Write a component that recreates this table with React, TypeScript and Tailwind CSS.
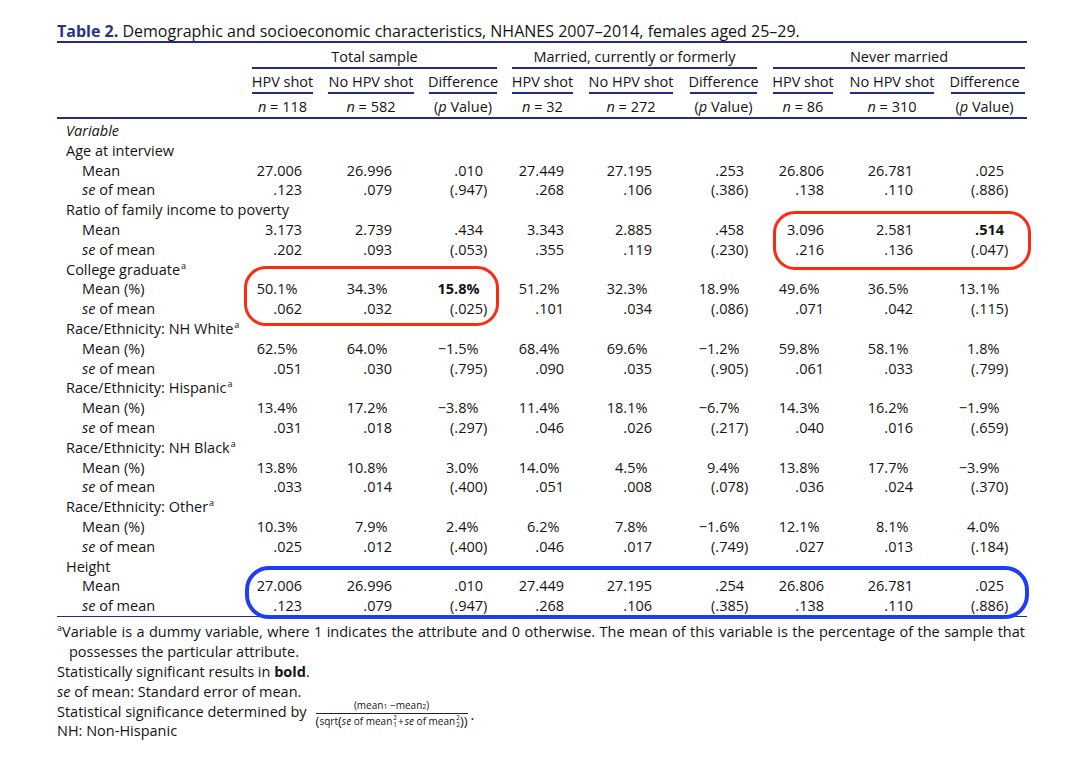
import React from "react";

type Row = { label: React.ReactNode; level: 0 | 1; vals?: string[]; bold?: number[] };

const Sup = () => <sup className="text-[9px] top-[-6px] ml-[1px]">a</sup>;
const SE = () => (
  <>
    <i>se</i> of mean
  </>
);

const rows: Row[] = [
  { label: <i>Variable</i>, level: 0 },
  { label: "Age at interview", level: 0 },
  { label: "Mean", level: 1, vals: ["27.006", "26.996", ".010", "27.449", "27.195", ".253", "26.806", "26.781", ".025"] },
  { label: <SE />, level: 1, vals: [".123", ".079", "(.947)", ".268", ".106", "(.386)", ".138", ".110", "(.886)"] },
  { label: "Ratio of family income to poverty", level: 0 },
  { label: "Mean", level: 1, vals: ["3.173", "2.739", ".434", "3.343", "2.885", ".458", "3.096", "2.581", ".514"], bold: [8] },
  { label: <SE />, level: 1, vals: [".202", ".093", "(.053)", ".355", ".119", "(.230)", ".216", ".136", "(.047)"] },
  { label: <>College graduate<Sup /></>, level: 0 },
  { label: "Mean (%)", level: 1, vals: ["50.1%", "34.3%", "15.8%", "51.2%", "32.3%", "18.9%", "49.6%", "36.5%", "13.1%"], bold: [2] },
  { label: <SE />, level: 1, vals: [".062", ".032", "(.025)", ".101", ".034", "(.086)", ".071", ".042", "(.115)"] },
  { label: <>Race/Ethnicity: NH White<Sup /></>, level: 0 },
  { label: "Mean (%)", level: 1, vals: ["62.5%", "64.0%", "\u22121.5%", "68.4%", "69.6%", "\u22121.2%", "59.8%", "58.1%", "1.8%"] },
  { label: <SE />, level: 1, vals: [".051", ".030", "(.795)", ".090", ".035", "(.905)", ".061", ".033", "(.799)"] },
  { label: <>Race/Ethnicity: Hispanic<Sup /></>, level: 0 },
  { label: "Mean (%)", level: 1, vals: ["13.4%", "17.2%", "\u22123.8%", "11.4%", "18.1%", "\u22126.7%", "14.3%", "16.2%", "\u22121.9%"] },
  { label: <SE />, level: 1, vals: [".031", ".018", "(.297)", ".046", ".026", "(.217)", ".040", ".016", "(.659)"] },
  { label: <>Race/Ethnicity: NH Black<Sup /></>, level: 0 },
  { label: "Mean (%)", level: 1, vals: ["13.8%", "10.8%", "3.0%", "14.0%", "4.5%", "9.4%", "13.8%", "17.7%", "\u22123.9%"] },
  { label: <SE />, level: 1, vals: [".033", ".014", "(.400)", ".051", ".008", "(.078)", ".036", ".024", "(.370)"] },
  { label: <>Race/Ethnicity: Other<Sup /></>, level: 0 },
  { label: "Mean (%)", level: 1, vals: ["10.3%", "7.9%", "2.4%", "6.2%", "7.8%", "\u22121.6%", "12.1%", "8.1%", "4.0%"] },
  { label: <SE />, level: 1, vals: [".025", ".012", "(.400)", ".046", ".017", "(.749)", ".027", ".013", "(.184)"] },
  { label: "Height", level: 0 },
  { label: "Mean", level: 1, vals: ["27.006", "26.996", ".010", "27.449", "27.195", ".254", "26.806", "26.781", ".025"] },
  { label: <SE />, level: 1, vals: [".123", ".079", "(.947)", ".268", ".106", "(.385)", ".138", ".110", "(.886)"] },
];

const colPr = [
  "pr-[26px]",
  "pr-[37px]",
  "pr-[29px]",
  "pr-[25px]",
  "pr-[38px]",
  "pr-[29px]",
  "pr-[26px]",
  "pr-[38px]",
  "pr-[23px]",
];

const headW = [
  "w-[61px]",
  "w-[86px]",
  "w-[68px]",
  "w-[61px]",
  "w-[84px]",
  "w-[67px]",
  "w-[60px]",
  "w-[84px]",
  "w-[74px] pr-[7px]",
];

const heads = ["HPV shot", "No HPV shot", "Difference", "HPV shot", "No HPV shot", "Difference", "HPV shot", "No HPV shot", "Difference"];
const N = ({ v }: { v: string }) => (
  <span className="whitespace-pre">
    <i>n</i> = {v}
  </span>
);
const P = () => (
  <span className="whitespace-pre">
    (<i>p</i> Value)
  </span>
);
const ns: React.ReactNode[] = [
  <N v="118" />,
  <N v="582" />,
  <P />,
  <N v="32" />,
  <N v="272" />,
  <P />,
  <N v="86" />,
  <N v="310" />,
  <P />,
];

const GRID = "grid grid-cols-[195px_76px_101px_83px_77px_101px_83px_77px_101px_76px]";

function Val({ v, bold, pr }: { v: string; bold?: boolean; pr: string }) {
  const i = v.indexOf(".");
  const a = v.slice(0, i + 1);
  const b = v.slice(i + 1);
  return (
    <div className={`flex justify-end ${pr} ${bold ? "font-bold" : ""}`}>
      <span className="whitespace-nowrap">{a}</span>
      <span className="w-[3ch] text-left whitespace-nowrap">{b}</span>
    </div>
  );
}

function Stack({ sub }: { sub: string }) {
  return (
    <span className="inline-flex flex-col leading-[7px] text-[6.5px] ml-[1px]">
      <span>2</span>
      <span>{sub}</span>
    </span>
  );
}

export default function App() {
  const line = "bg-[#232c82]";
  return (
    <div className="relative w-[1075px] h-[760px] bg-white text-[#141414] font-['Open_Sans',sans-serif] text-[14.5px]">
      <div className="ml-[57px] w-[970px] pt-[21px]">
        {/* Title */}
        <div className="h-[20px] leading-[20px] text-[16px] whitespace-nowrap">
          <span className="font-bold text-[#27328c]">Table 2.</span> Demographic and socioeconomic characteristics, NHANES
          2007–2014, females aged 25–29.
        </div>
        <div className={`h-[2px] ${line}`} />

        {/* Group header */}
        <div className={`${GRID} mt-[4px]`}>
          <div />
          <div className="col-span-3">
            <div className="w-[245px] h-[22px] leading-[20px] text-center border-b-2 border-[#232c82]">Total sample</div>
          </div>
          <div className="col-span-3">
            <div className="w-[245px] h-[22px] leading-[20px] text-center border-b-2 border-[#232c82] whitespace-nowrap">
              Married, currently or formerly
            </div>
          </div>
          <div className="col-span-3">
            <div className="w-[252px] h-[22px] leading-[20px] text-center border-b-2 border-[#232c82]">Never married</div>
          </div>
        </div>

        {/* Column header */}
        <div className={`${GRID} mt-[3px]`}>
          <div />
          {heads.map((h, i) => (
            <div key={i}>
              <div className={`${headW[i]} h-[22px] leading-[20px] flex justify-center whitespace-nowrap border-b-2 border-[#232c82]`}>
                {h}
              </div>
            </div>
          ))}
        </div>

        {/* n row */}
        <div className={`${GRID} mt-[3px]`}>
          <div />
          {ns.map((n, i) => (
            <div key={i}>
              <div className={`${headW[i]} h-[20px] leading-[20px] flex justify-center whitespace-nowrap`}>{n}</div>
            </div>
          ))}
        </div>
        <div className={`h-[2px] ${line}`} />

        {/* Body */}
        <div className="mt-[2px]">
          {rows.map((r, ri) => (
            <div key={ri} className={`${GRID} h-[19.8px] leading-[19.8px]`}>
              <div className={`whitespace-nowrap ${r.level === 0 ? "pl-[9px]" : "pl-[25px]"} ${r.vals ? "" : "col-span-10"}`}>
                {r.label}
              </div>
              {r.vals &&
                r.vals.map((v, ci) => <Val key={ci} v={v} pr={colPr[ci]} bold={r.bold?.includes(ci)} />)}
            </div>
          ))}
        </div>
        <div className={`h-[1.5px] ${line}`} />

        {/* Footnotes */}
        <div className="mt-[5px] leading-[19.8px]">
          <div className="h-[19.8px] whitespace-nowrap flex justify-between pr-[2px]">
            {"Variable is a dummy variable, where 1 indicates the attribute and 0 otherwise. The mean of this variable is the percentage of the sample that"
              .split(" ")
              .map((w, i) =>
                i === 0 ? (
                  <span key={i}>
                    <sup className="text-[9px] top-[-6px]">a</sup>Variable
                  </span>
                ) : (
                  <span key={i}>{w}</span>
                )
              )}
          </div>
          <div className="h-[19.8px] pl-[12px]">possesses the particular attribute.</div>
          <div className="h-[19.8px]">
            Statistically significant results in <b>bold</b>.
          </div>
          <div className="h-[19.8px]">
            <i>se</i> of mean: Standard error of mean.
          </div>
          <div className="h-[19.8px] flex items-center whitespace-nowrap">
            <span>Statistical significance determined by</span>
            <span className="inline-flex flex-col items-center ml-[9px] relative top-[2px]">
              <span className="text-[10px] leading-[12px] px-[2px] whitespace-pre">
                (mean<span className="text-[7px]">1</span> −mean<span className="text-[7px]">2</span>)
              </span>
              <span className="h-[1px] w-full bg-[#222]" />
              <span className="text-[10px] leading-[15px] flex items-center whitespace-pre">
                <span className="text-[13px] leading-[15px]">(</span>
                <span>sqrt</span>
                <span className="text-[13px] leading-[15px]">(</span>
                <i>se</i>
                <span> of mean</span>
                <Stack sub="1" />
                <span className="mx-[1px]">+</span>
                <i>se</i>
                <span> of mean</span>
                <Stack sub="2" />
                <span className="text-[13px] leading-[15px]">))</span>
              </span>
            </span>
            <span className="ml-[3px] relative top-[3px]">.</span>
          </div>
          <div className="h-[19.8px]">NH: Non-Hispanic</div>
        </div>
      </div>

      {/* Highlight annotations */}
      <div className="absolute left-[244px] top-[266px] w-[255px] h-[60px] border-[3.5px] border-[#fb2a10] rounded-[22px]" />
      <div className="absolute left-[773px] top-[211px] w-[258px] h-[59px] border-[3.5px] border-[#fb2a10] rounded-[22px]" />
      <div className="absolute left-[245px] top-[566px] w-[784px] h-[53px] border-[4px] border-[#1c3ef5] rounded-[24px]" />
    </div>
  );
}
